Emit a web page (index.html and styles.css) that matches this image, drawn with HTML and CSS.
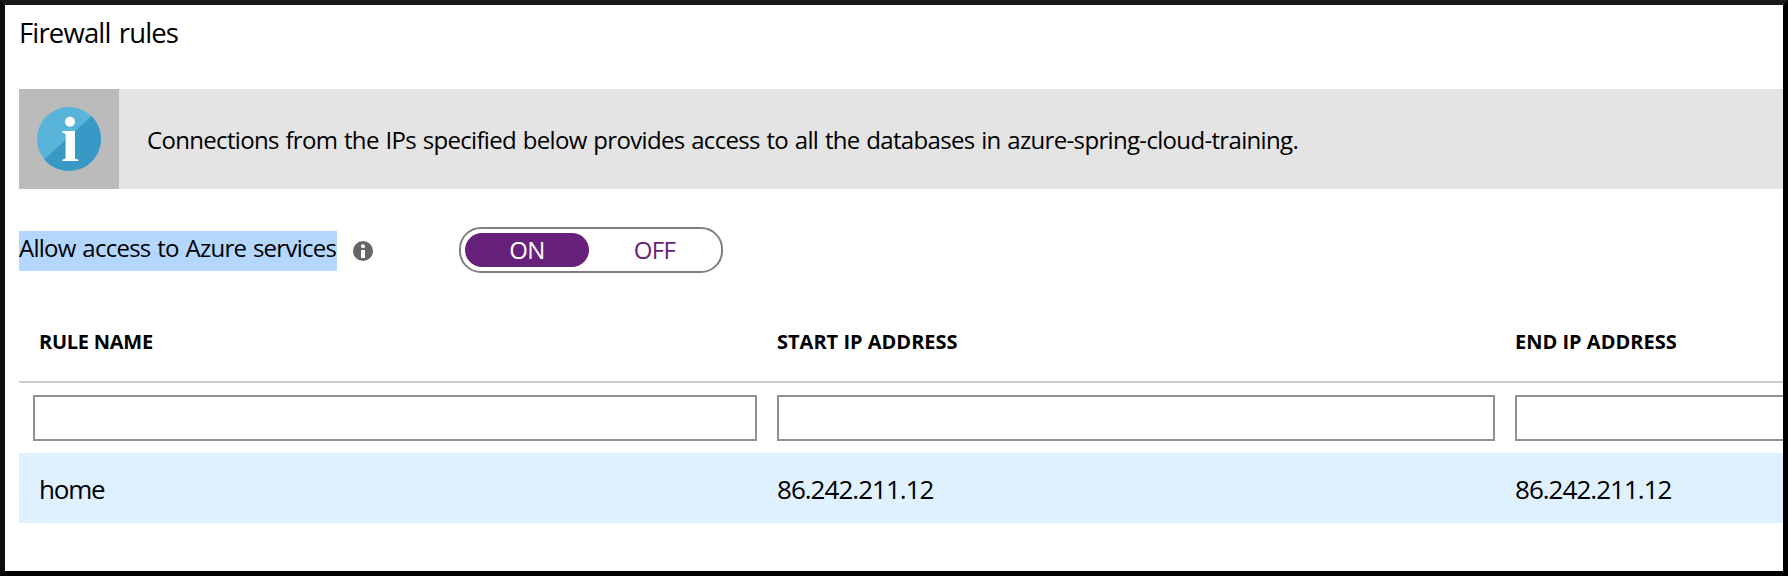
FILE: index.html
```
<!DOCTYPE html>
<html lang="en">
<head>
<meta charset="utf-8">
<title>Firewall rules</title>
<link rel="stylesheet" href="styles.css">
</head>
<body>
<main class="panel">
  <h1 class="title">Firewall rules</h1>
  <section class="banner">
    <div class="banner-icon">
      <svg width="64" height="64" viewBox="0 0 64 64">
        <defs><clipPath id="disc"><circle cx="32" cy="32" r="32"/></clipPath></defs>
        <g clip-path="url(#disc)">
          <path d="M0 0H64V64H0Z" fill="#59b4d9"/>
          <path d="M64 .5V64H0V59Z" fill="#3999c6"/>
        </g>
        <circle cx="33" cy="14.8" r="5" fill="#fff"/>
        <path d="M25.3 24H38V50.8Q38 52.4 41.2 52.6V54H25.3V52.6Q28.6 52.4 28.6 50.8V27.5Q28.4 25.6 25.3 25.4Z" fill="#fff"/>
      </svg>
    </div>
    <p class="banner-text">Connections from the IPs specified below provides access to all the databases in azure-spring-cloud-training.</p>
  </section>
  <section class="setting">
    <span class="setting-label">Allow access to Azure services</span>
    <svg class="hint" width="20" height="20" viewBox="0 0 20 20">
      <circle cx="10" cy="10" r="10" fill="#666"/>
      <circle cx="10" cy="5.2" r="2" fill="#fff"/>
      <path d="M8 9H12V17H8Z" fill="#fff"/>
    </svg>
    <div class="toggle">
      <span class="option option-on">ON</span>
      <span class="option option-off">OFF</span>
    </div>
  </section>
  <section class="grid">
    <div class="row row-head"><span class="rule-name">RULE NAME</span><span>START IP ADDRESS</span><span>END IP ADDRESS</span></div>
    <div class="row row-inputs"><div class="field"></div><div class="field"></div><div class="field"></div></div>
    <div class="row row-data"><span>home</span><span class="ip">86.242.211.12</span><span class="ip">86.242.211.12</span></div>
  </section>
</main>
</body>
</html>
```
FILE: styles.css
```
* { box-sizing: border-box; }
body { margin: 0; font-family: "Open Sans", "Noto Sans", sans-serif; color: #000; }
.panel {
  height: 576px;
  overflow: hidden;
  border: 5px solid;
  border-color: #1a1a1a #000 #000 #0d0d0d;
  background: #fff;
  padding-left: 14px;
}
.title { margin: 0; height: 84px; padding-top: 9px; font-size: 27.5px; font-weight: 400; line-height: 38px; letter-spacing: -0.85px; word-spacing: 2px; }
.banner { display: flex; height: 100px; background: #e4e4e4; }
.banner-icon { display: flex; align-items: center; justify-content: center; width: 100px; background: #bbb; }
.banner-text { margin: 0; padding-left: 28px; font-size: 24px; line-height: 102px; letter-spacing: -0.67px; word-spacing: 1.1px; white-space: nowrap; }
.setting { display: flex; align-items: flex-start; height: 122px; padding-top: 38px; }
.setting-label { width: 318px; height: 40px; margin-top: 4px; background: #b3d7ff; font-size: 24px; line-height: 34px; letter-spacing: -0.74px; word-spacing: 1.2px; white-space: nowrap; }
.hint { margin: 14px 0 0 16px; }
.toggle { display: flex; width: 264px; height: 46px; margin-left: 86px; padding: 4px; border: 2px solid #808080; border-radius: 22px; }
.option { flex: 1; border-radius: 17px; color: #68217a; font-size: 24px; line-height: 34px; letter-spacing: -0.7px; text-align: center; }
.option-on { flex: none; width: 124px; background: #68217a; color: #fff; }
.option-off { padding-left: 3px; }
.row { display: grid; grid-template-columns: 738px 738px 738px; width: 2214px; padding-left: 20px; }
.row-head { height: 72px; border-bottom: 2px solid #ccc; font-size: 20px; font-weight: 700; line-height: 62px; }
.rule-name { letter-spacing: -0.25px; }
.row-inputs { grid-template-columns: 724px 718px 718px; gap: 20px; height: 70px; padding: 12px 0 0 14px; }
.field { height: 46px; border: 2px solid #919191; }
.row-data { height: 70px; background: #dff0ff; font-size: 26px; line-height: 72px; letter-spacing: -1.2px; }
.ip { letter-spacing: -0.98px; }
```
